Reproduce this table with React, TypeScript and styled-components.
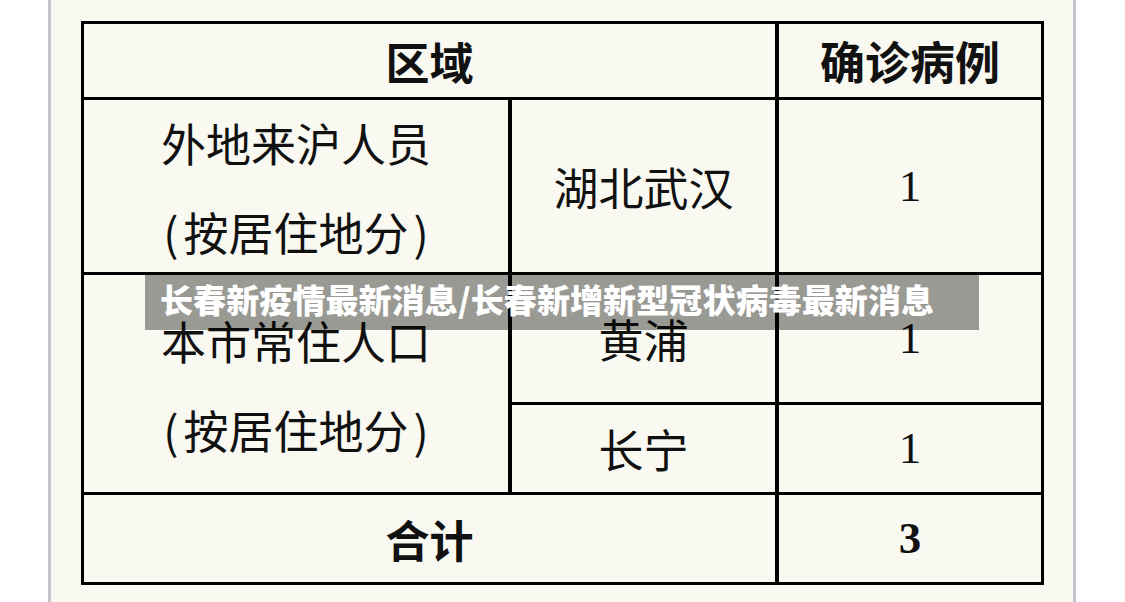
import React from "react";
import styled, { createGlobalStyle } from "styled-components";

const Global = createGlobalStyle`
  html, body { margin: 0; padding: 0; background: #ffffff; }
  body { font-family: "Noto Sans CJK SC", "Noto Sans", sans-serif; }
  * { box-sizing: border-box; }
`;

const Page = styled.div`
  width: 1125px;
  height: 602px;
  overflow: hidden;
  background: #ffffff;
`;

const Panel = styled.div`
  position: relative;
  margin-left: 48px;
  width: 1028px;
  height: 602px;
  background: #f9f9f1;
  border-left: 3px solid #c2c5cd;
  border-right: 3px solid #c2c5cd;
  padding: 21px 0 0 30px;
`;

const Grid = styled.div`
  display: grid;
  width: 963px;
  grid-template-columns: 424px 263px 262px;
  grid-template-rows: 73px 172px 127px 87px 87px;
  gap: 3px 4px;
  background: #000000;
  border: 3px solid #000000;
`;

const Cell = styled.div<{ $col: string; $row: string; $bold?: boolean; $serif?: boolean; $size?: number }>`
  grid-column: ${(p) => p.$col};
  grid-row: ${(p) => p.$row};
  background: #f9f9f1;
  display: flex;
  align-items: center;
  justify-content: center;
  text-align: center;
  color: #111111;
  font-family: ${(p) =>
    p.$serif ? `"Liberation Serif", "Times New Roman", serif` : `"Noto Sans CJK SC", "Noto Sans", sans-serif`};
  font-weight: ${(p) => (p.$bold ? 700 : 400)};
  font-size: ${(p) => p.$size ?? 45}px;
  line-height: 1;
`;

const Lines = styled.div`
  display: flex;
  flex-direction: column;
  align-items: center;
  line-height: 89px;
  margin-top: 2px;
`;

const Paren = styled.span`
  margin: 0 5px;
`;

const Banner = styled.div`
  position: absolute;
  left: 94px;
  top: 273px;
  width: 834px;
  height: 57px;
  background: rgba(0, 0, 0, 0.38);
  color: #ffffff;
  font-family: "Noto Sans CJK SC", "Noto Sans", sans-serif;
  font-weight: 900;
  font-size: 33px;
  display: flex;
  align-items: center;
  padding-left: 15px;
  padding-bottom: 6px;
  white-space: nowrap;
  letter-spacing: 0.1px;
`;

export default function App() {
  return (
    <Page>
      <Global />
      <Panel>
        <Grid>
          <Cell $col="1 / 3" $row="1" $bold $size={44}>区域</Cell>
          <Cell $col="3" $row="1" $bold $size={45}>确诊病例</Cell>

          <Cell $col="1" $row="2">
            <Lines>
              <span>外地来沪人员</span>
              <span><Paren>(</Paren>按居住地分<Paren>)</Paren></span>
            </Lines>
          </Cell>
          <Cell $col="2" $row="2">湖北武汉</Cell>
          <Cell $col="3" $row="2" $serif>1</Cell>

          <Cell $col="1" $row="3 / 5">
            <Lines>
              <span>本市常住人口</span>
              <span><Paren>(</Paren>按居住地分<Paren>)</Paren></span>
            </Lines>
          </Cell>
          <Cell $col="2" $row="3">黄浦</Cell>
          <Cell $col="3" $row="3" $serif>1</Cell>
          <Cell $col="2" $row="4">长宁</Cell>
          <Cell $col="3" $row="4" $serif>1</Cell>

          <Cell $col="1 / 3" $row="5" $bold $size={44}>合计</Cell>
          <Cell $col="3" $row="5" $serif $bold>3</Cell>
        </Grid>
        <Banner>长春新疫情最新消息/长春新增新型冠状病毒最新消息</Banner>
      </Panel>
    </Page>
  );
}
